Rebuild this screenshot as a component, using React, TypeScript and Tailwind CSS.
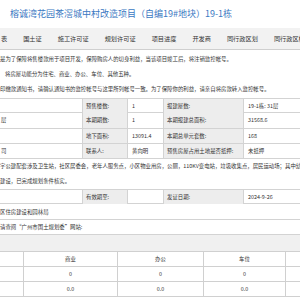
import React from 'react';

const tabs = ['表', '国土证', '施工许可证', '规划许可证', '项目进度', '开发商', '同行政区划', '同行政区楼盘'];

interface InfoRowProps {
  lead?: string;
  label: string;
  value: string;
  label2: string;
  value2: string;
  top?: boolean;
}

const InfoRow: React.FC<InfoRowProps> = ({ lead, label, value, label2, value2, top }) => (
  <div
    className={`grid grid-cols-[82px_45px_36px_80px_57px] h-[15.3px] leading-[14.3px] border-b border-[#d3d3d3] ${
      top ? 'border-t' : ''
    }`}
  >
    <div className="pl-[1px] whitespace-nowrap overflow-hidden">{lead}</div>
    <div className="bg-[#ededed] border-l border-[#d3d3d3] pl-[3px] whitespace-nowrap">{label}</div>
    <div className="border-l border-[#d3d3d3] pl-[4px] whitespace-nowrap">{value}</div>
    <div className="bg-[#ededed] border-l border-[#d3d3d3] pl-[3px] whitespace-nowrap overflow-hidden">{label2}</div>
    <div className="border-l border-[#d3d3d3] pl-[4px] whitespace-nowrap">{value2}</div>
  </div>
);

const StatRow = ({ cells, header }: { cells: string[]; header?: boolean }) => (
  <div
    className={`grid grid-cols-[23px_94px_86px_82px_15px] h-[15.2px] leading-[14.2px] border-b border-[#d0d0d0] ${
      header ? 'border-t' : ''
    }`}
  >
    {cells.map((c, i) => (
      <div key={i} className={`text-center whitespace-nowrap ${i > 0 ? 'border-l border-[#d0d0d0]' : ''}`}>
        {c}
      </div>
    ))}
  </div>
);

export default function App() {
  return (
    <div className="w-[300px] h-[300px] overflow-hidden bg-white text-[#333] text-[5.4px] font-['Noto_Sans_CJK_SC',sans-serif]">
      <div className="h-[27px] leading-[27px] pl-[10px] text-[9px] text-[#3a78c2] whitespace-nowrap">
        榕诚湾花园茶滘城中村改造项目（自编19#地块）19-1栋
      </div>

      <div className="mt-[1px] h-[22px] flex items-center bg-[#f2f2f2] border-b border-[#cfcfcf] text-[6.2px] text-[#333] whitespace-nowrap">
        {tabs.map((t, i) => (
          <div key={t} className={i === 0 ? 'pl-[1px] pr-[8px]' : 'px-[8px]'}>
            {t}
          </div>
        ))}
      </div>

      <div className="pt-[2px] pb-[1px] whitespace-nowrap">
        <div className="h-[15px] leading-[15px]">
          是为了保障将售楼款用于项目开发，保障购房人的切身利益，当该项目竣工后，将注销监控帐号。
        </div>
        <div className="h-[15px] leading-[15px] pl-[5px]">将房屋功能分为住宅、商业、办公、车位、其他五种。</div>
        <div className="h-[15px] leading-[15px]">
          印缴款通知书，请确认通知书的监控帐号与这里所列帐号一致。为了保障你的利益，请亲自将房款转入监控帐号。
        </div>
      </div>

      <InfoRow top label="预售楼数:" value="1" label2="报建屋数:" value2="19-1栋: 31层" />
      <InfoRow lead="层" label="本期期数:" value="1" label2="本期报建总面积:" value2="31568.6" />
      <InfoRow label="地下面积:" value="13091.4" label2="本期总单元套数:" value2="168" />
      <InfoRow lead="司" label="联系人:" value="黄向明" label2="预售房屋占用土地是否抵押:" value2="未抵押" />

      <div className="whitespace-nowrap">
        <div className="h-[15px] leading-[15px]">
          字公建配套涉及卫生站，社区居委会，老年人服务点，小区物业用房，公厕，110KV变电站，垃圾收集点，居民运动场；其中幼儿园
        </div>
        <div className="h-[15px] leading-[15px]">建设，已完成规划条件核实。</div>
      </div>

      <InfoRow top label="有效期至:" value="" label2="发证日期:" value2="2024-9-26" />

      <div className="h-[16px] leading-[16px] border-b border-[#d3d3d3] whitespace-nowrap">区住房建设和园林局</div>
      <div className="h-[15px] leading-[15px] border-b border-[#d3d3d3] whitespace-nowrap">
        请查阅“广州市国土规划委”网站:
      </div>

      <div className="h-[16px] bg-[#f0f0f0]" />

      <StatRow header cells={['', '商业', '办公', '车位', '']} />
      <StatRow cells={['', '0', '0', '0', '']} />
      <StatRow cells={['', '0.0', '0.0', '0.0', '']} />
    </div>
  );
}
